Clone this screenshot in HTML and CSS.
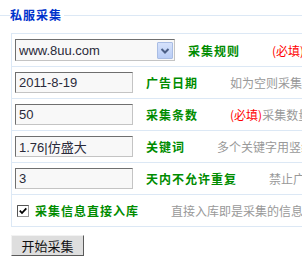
FILE: index.html
```html
<!DOCTYPE html>
<html lang="zh-cn">
<head>
    <meta charset="UTF-8">
    <meta name="viewport" content="width=device-width, initial-scale=1.0">
    <title>私服采集</title>
    <link rel="stylesheet" href="styles.css">
</head>
<body>
    <fieldset class="painel">
        <legend class="painel-titulo">私服采集</legend>
        <table class="formulario">
            <tr>
              <td>
                <div class="linha linha-alta">
                  <span class="caixa-select">
                    <select class="campo-select"><option>www.8uu.com</option></select>
                    <span class="select-botao">
                      <svg width="14" height="15" viewBox="0 0 14 15"><path d="M3.5 6 L7 9.5 L10.5 6" fill="none" stroke="#4b5f86" stroke-width="2"/></svg>
                    </span>
                  </span>
                  <span class="rotulo">采集规则</span>
                  <span class="nota"><span class="obrigatorio">(必填)</span>选择采集规则</span>
                </div>
              </td>
            </tr>
            <tr>
              <td>
                <div class="linha">
                  <input class="campo" type="text" value="2011-8-19">
                  <span class="rotulo">广告日期</span>
                  <span class="nota">如为空则采集全部日期</span>
                </div>
              </td>
            </tr>
            <tr>
              <td>
                <div class="linha">
                  <input class="campo" type="text" value="50">
                  <span class="rotulo">采集条数</span>
                  <span class="nota"><span class="obrigatorio">(必填)</span>采集数量</span>
                </div>
              </td>
            </tr>
            <tr>
              <td>
                <div class="linha">
                  <input class="campo" type="text" value="1.76|仿盛大">
                  <span class="rotulo">关键词</span>
                  <span class="nota">多个关键字用竖线分隔</span>
                </div>
              </td>
            </tr>
            <tr>
              <td>
                <div class="linha">
                  <input class="campo" type="text" value="3">
                  <span class="rotulo">天内不允许重复</span>
                  <span class="nota">禁止广告重复采集</span>
                </div>
              </td>
            </tr>
            <tr>
              <td>
                <div class="linha">
                  <span class="marcador">
                    <svg width="12" height="12" viewBox="0 0 12 12">
                      <rect x="0.5" y="0.5" width="11" height="11" fill="#fff" stroke="#9a9a9a"/>
                      <path d="M0.5 11.5 V0.5 H11.5" fill="none" stroke="#555"/>
                      <path d="M2.8 5.6 L5 8 L9.3 3.4" fill="none" stroke="#000" stroke-width="1.8"/>
                    </svg>
                  </span>
                  <span class="rotulo rotulo-marcador">采集信息直接入库</span>
                  <span class="nota">直接入库即是采集的信息直接发布</span>
                </div>
              </td>
            </tr>
        </table>
        <button class="botao" type="button">开始采集</button>
    </fieldset>
</body>
</html>
```

FILE: styles.css
```css
html, body {
  overflow: hidden;
}

body {
  margin: 0;
  font-family: "Noto Sans CJK SC", "Liberation Sans", sans-serif;
  font-size: 12px;
}

.painel {
  margin: 7px 0 0 0;
  padding: 0 0 0 11px;
  border: 0;
  border-top: 1px solid #dce8f5;
  min-width: 0;
}

.painel-titulo {
  margin-left: -1px;
  padding: 0 2px 0 0;
  font-size: 12px;
  font-weight: 700;
  line-height: 16px;
  letter-spacing: 1px;
  color: #0033cc;
}

.formulario {
  margin-top: 10px;
  border-collapse: separate;
  border-spacing: 0;
  border-top: 1px solid #dce8f5;
  border-left: 1px solid #dce8f5;
}

.formulario td {
  padding: 5px 0 5px 3px;
  border-bottom: 1px solid #dce8f5;
  white-space: nowrap;
}

.linha {
  display: flex;
  align-items: center;
  height: 21px;
}

.linha-alta {
  height: 22px;
}

.campo, .campo-select {
  box-sizing: border-box;
  width: 118px;
  height: 21px;
  margin: 0;
  padding: 0 3px;
  border: 1px solid;
  border-color: #6f6f6f #c4c4c4 #c4c4c4 #6f6f6f;
  background-color: #f8f8f8;
  font-family: "Liberation Sans", Arial, "Noto Sans CJK SC", sans-serif;
  font-size: 13px;
  color: #2a2a3a;
  outline: none;
}

.caixa-select {
  position: relative;
  display: inline-block;
  height: 22px;
}

.campo-select {
  appearance: none;
  width: 160px;
  height: 22px;
}

.select-botao {
  position: absolute;
  top: 3px;
  right: 2px;
  width: 14px;
  height: 15px;
  border: 1px solid #a9bde4;
  border-radius: 1px;
  background: linear-gradient(#d6e2fb, #b9cdf6);
  pointer-events: none;
}

.select-botao svg {
  display: block;
}

.rotulo {
  margin-left: 13px;
  font-weight: 700;
  letter-spacing: 1px;
  color: #008c00;
}

.nota {
  margin-left: 32px;
  color: #999;
}

.obrigatorio {
  color: #ff0000;
}

.marcador {
  display: inline-flex;
  margin-left: 2px;
}

.rotulo-marcador {
  margin-left: 6px;
}

.botao {
  display: block;
  margin: 8px 0 0 0;
  width: 73px;
  height: 21px;
  padding: 0;
  border: 1px solid;
  border-color: #f2f2f2 #5a5a5a #5a5a5a #f2f2f2;
  background-color: #dedede;
  font-family: "Noto Sans CJK SC", sans-serif;
  font-size: 13px;
  color: #111;
}
```
